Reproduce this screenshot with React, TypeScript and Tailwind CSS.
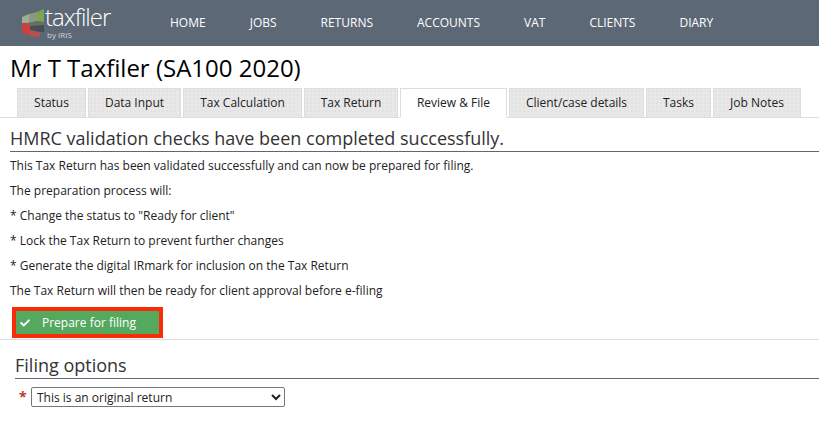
import { FaCheck } from 'react-icons/fa';

const navItems = ['HOME', 'JOBS', 'RETURNS', 'ACCOUNTS', 'VAT', 'CLIENTS', 'DIARY'];

const tabs = [
  { label: 'Status', width: 'w-[69px]' },
  { label: 'Data Input', width: 'w-[93px]' },
  { label: 'Tax Calculation', width: 'w-[119px]' },
  { label: 'Tax Return', width: 'w-[94px]' },
  { label: 'Review & File', width: 'w-[107px]', active: true },
  { label: 'Client/case details', width: 'w-[135px]' },
  { label: 'Tasks', width: 'w-[65px]' },
  { label: 'Job Notes', width: 'w-[88px]' },
];

const lines = [
  'This Tax Return has been validated successfully and can now be prepared for filing.',
  'The preparation process will:',
  '* Change the status to "Ready for client"',
  '* Lock the Tax Return to prevent further changes',
  '* Generate the digital IRmark for inclusion on the Tax Return',
  'The Tax Return will then be ready for client approval before e-filing',
];

function Logo() {
  return (
    <div className="flex items-start">
      <svg width="24" height="28" viewBox="0 0 24 28" className="mt-[9px] ml-[21px]">
        <path d="M1 8 L8 5 L8 14 L1 14 Z" fill="#a3aa98" />
        <path d="M8 5 L16 3 L16 12 L8 14 Z" fill="#8a9a7c" />
        <path d="M16 3 L23 0 V13 L16 12 Z" fill="#7da653" />
        <path d="M1 14 L23 13 V20 L11 19 L1 17 Z" fill="#6a7060" />
        <path d="M9 17 L23 16 V23 L9 23 Z" fill="#454f5a" />
        <path d="M1 14 L9 15 V26 L1 24 Z" fill="#c9403f" />
        <path d="M9 21 L19 23 V28 L9 27 Z" fill="#b9504e" />
      </svg>
      <div className="flex flex-col">
        <span className="mt-[3px] h-[27px] text-[24px] leading-[27px] tracking-[-1px] text-white font-light">
          taxfiler
        </span>
        <span className="ml-[2px] text-[8px] leading-[10px] text-[#d3d7da]">by IRIS</span>
      </div>
    </div>
  );
}

export default function App() {
  return (
    <div className="w-[819px] h-[425px] overflow-hidden bg-white font-['Open_Sans',sans-serif] text-[#222]">
      <header className="h-[46px] bg-[#5c6875] flex">
        <div className="w-[148px]">
          <Logo />
        </div>
        <nav className="flex">
          {navItems.map((item) => (
            <a key={item} className="h-[46px] px-[22px] flex items-center text-[12px] text-white">
              {item}
            </a>
          ))}
        </nav>
      </header>

      <h1 className="ml-[10px] mt-[4px] h-[38px] text-[24px] leading-[36px] font-normal text-black">
        Mr T Taxfiler (SA100 2020)
      </h1>

      <div className="flex gap-[2px] pl-[17px] h-[30px] border-b border-[#ddd]">
        {tabs.map((tab) => (
          <div
            key={tab.label}
            className={`${tab.width} h-[30px] flex items-center justify-center text-[12px] border border-[#ddd] ${
              tab.active
                ? 'bg-white border-b-white'
                : 'bg-[#e8e8e8] bg-[radial-gradient(#e2e2e2_1px,transparent_1px)] bg-[length:4px_4px]'
            }`}
          >
            {tab.label}
          </div>
        ))}
      </div>

      <h2 className="ml-[10px] mt-[8px] h-[26px] text-[18px] leading-[25px] font-normal text-[#333] border-b border-[#5c6875]">
        HMRC validation checks have been completed successfully.
      </h2>

      <div className="pl-[10px] mt-[5px] flex flex-col gap-[7px]">
        {lines.map((line) => (
          <p key={line} className="text-[12px] leading-[18px] text-[#222]">
            {line}
          </p>
        ))}
      </div>

      <div className="pl-[12px] mt-[7px] pb-[1px] border-b border-[#ddd]">
        <button className="w-[151px] h-[31px] border-[4px] border-[#f92c08] bg-[#55a95f] flex items-center text-[12px] text-white">
          <FaCheck className="ml-[4px] w-[10px] h-[10px]" />
          <span className="ml-[12px]">Prepare for filing</span>
        </button>
      </div>

      <h2 className="ml-[15px] mt-[13px] h-[26px] text-[18px] leading-[25px] font-normal text-[#333] border-b border-[#5c6875]">
        Filing options
      </h2>

      <div className="flex items-center ml-[19px] mt-[8px]">
        <span className="w-[12px] text-[14px] leading-[16px] font-bold text-[#c0392b]">*</span>
        <select className="w-[254px] h-[20px] pl-[1px] text-[12px] bg-white border border-[#777] rounded-[2px] text-[#222]">
          <option>This is an original return</option>
        </select>
      </div>
    </div>
  );
}
